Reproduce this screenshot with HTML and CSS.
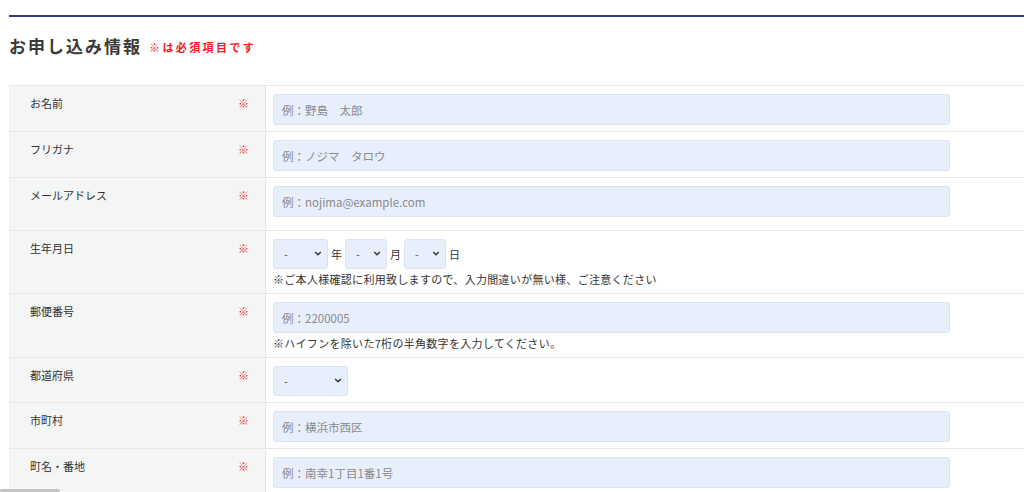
FILE: index.html
```html
<!doctype html>
<html lang="ja">
  <head>
    <title>お申し込み情報</title>
    <meta charset="utf-8" />
    <link rel="stylesheet" href="styles.css">
  </head>
  <body>
    <div class="page">
      <div class="rule"></div>
      <h2 class="title">お申し込み情報<span class="must">※は必須項目です</span></h2>

      <table class="form">
        <tr>
          <td class="label"><span>お名前</span><span class="req">※</span></td>
          <td class="field"><input class="text" type="text" placeholder="例：野島　太郎"></td>
        </tr>
        <tr>
          <td class="label"><span>フリガナ</span><span class="req">※</span></td>
          <td class="field"><input class="text" type="text" placeholder="例：ノジマ　タロウ"></td>
        </tr>
        <tr>
          <td class="label"><span>メールアドレス</span><span class="req">※</span></td>
          <td class="field tall"><input class="text" type="text" placeholder="例：nojima@example.com"></td>
        </tr>
        <tr>
          <td class="label"><span>生年月日</span><span class="req">※</span></td>
          <td class="field">
            <div class="dates">
              <span class="sel year"><select><option>-</option></select>
                <svg viewBox="0 0 10 6"><path d="M1.5 1 L5 4.5 L8.5 1" /></svg></span>
              <span class="unit">年</span>
              <span class="sel small"><select><option>-</option></select>
                <svg viewBox="0 0 10 6"><path d="M1.5 1 L5 4.5 L8.5 1" /></svg></span>
              <span class="unit">月</span>
              <span class="sel small"><select><option>-</option></select>
                <svg viewBox="0 0 10 6"><path d="M1.5 1 L5 4.5 L8.5 1" /></svg></span>
              <span class="unit">日</span>
            </div>
            <p class="note">※ご本人様確認に利用致しますので、入力間違いが無い様、ご注意ください</p>
          </td>
        </tr>
        <tr>
          <td class="label"><span>郵便番号</span><span class="req">※</span></td>
          <td class="field">
            <input class="text" type="text" placeholder="例：2200005">
            <p class="note">※ハイフンを除いた7桁の半角数字を入力してください。</p>
          </td>
        </tr>
        <tr>
          <td class="label"><span>都道府県</span><span class="req">※</span></td>
          <td class="field">
            <span class="sel pref"><select><option>-</option></select>
              <svg viewBox="0 0 10 6"><path d="M1.5 1 L5 4.5 L8.5 1" /></svg></span>
          </td>
        </tr>
        <tr>
          <td class="label"><span>市町村</span><span class="req">※</span></td>
          <td class="field"><input class="text" type="text" placeholder="例：横浜市西区"></td>
        </tr>
        <tr>
          <td class="label"><span>町名・番地</span><span class="req">※</span></td>
          <td class="field"><input class="text" type="text" placeholder="例：南幸1丁目1番1号"></td>
        </tr>
      </table>
    </div>
    <div class="thumb"></div>
  </body>
</html>
```

FILE: styles.css
```css
html, body {
  margin: 0;
  padding: 0;
  background: #ffffff;
  overflow: hidden;
}

body {
  font-family: "Noto Sans CJK JP", "Noto Sans", sans-serif;
  color: #333333;
}

.page {
  padding: 15px 0 0 9px;
}

.rule {
  border-top: 2px solid #2b3c8e;
}

.title {
  margin: 17px 0 26px 0;
  font-size: 17px;
  line-height: 24px;
  font-weight: bold;
  letter-spacing: 2px;
  color: #3a3a3a;
}

.title .must {
  margin-left: 7px;
  font-size: 11px;
  letter-spacing: 2.4px;
  color: #ee1c1c;
  vertical-align: 1px;
}

table.form {
  width: 100%;
  border-collapse: collapse;
  table-layout: fixed;
}

table.form td {
  border-top: 1px solid #e6e7e7;
  border-bottom: 1px solid #e6e7e7;
  vertical-align: top;
}

td.label {
  width: 256px;
  box-sizing: border-box;
  padding: 9px 16px 0 20px;
  background: #f4f5f5;
  border-right: 1px solid #e6e7e7;
  border-left: 1px solid #eeeeee;
  font-size: 11px;
  line-height: 16px;
}

td.label span:first-child {
  float: left;
}

td.label .req {
  float: right;
  color: #ec3c3c;
  font-size: 11px;
}

td.field {
  padding: 8px 7px 6px 7px;
}

td.field.tall {
  padding-bottom: 13px;
}

input.text {
  display: block;
  box-sizing: border-box;
  width: 677px;
  height: 31px;
  margin: 0;
  padding: 0 8px;
  border: 1px solid #dbe3f0;
  border-radius: 3px;
  background: #e8effc;
  font-family: "Noto Sans CJK JP", "Noto Sans", sans-serif;
  font-size: 11.5px;
  color: #333333;
}

input.text::placeholder {
  color: #8a8a8a;
}

.dates {
  display: flex;
  align-items: center;
}

.sel {
  position: relative;
  display: inline-block;
  height: 30px;
}

.sel select {
  appearance: none;
  -webkit-appearance: none;
  box-sizing: border-box;
  width: 100%;
  height: 30px;
  margin: 0;
  padding: 0 0 0 10px;
  border: 1px solid #dbe3f0;
  border-radius: 3px;
  background: #e8effc;
  font-family: "Noto Sans CJK JP", "Noto Sans", sans-serif;
  font-size: 11px;
  color: #555555;
}

.sel svg {
  position: absolute;
  right: 6px;
  top: 12px;
  width: 8px;
  height: 5px;
  fill: none;
  stroke: #333333;
  stroke-width: 1.8;
  pointer-events: none;
}

.sel.year { width: 55px; }
.sel.small { width: 42px; }
.sel.pref { width: 75px; }

.unit {
  font-size: 11px;
  margin: 0 3px;
  color: #333333;
}

.note {
  margin: 2px 0 0 0;
  font-size: 11px;
  line-height: 16px;
  letter-spacing: 0.3px;
  color: #333333;
}

.thumb {
  position: fixed;
  left: 0;
  bottom: 0;
  width: 60px;
  height: 3px;
  background: #c4c4c4;
  border-radius: 2px 2px 0 0;
}
```
